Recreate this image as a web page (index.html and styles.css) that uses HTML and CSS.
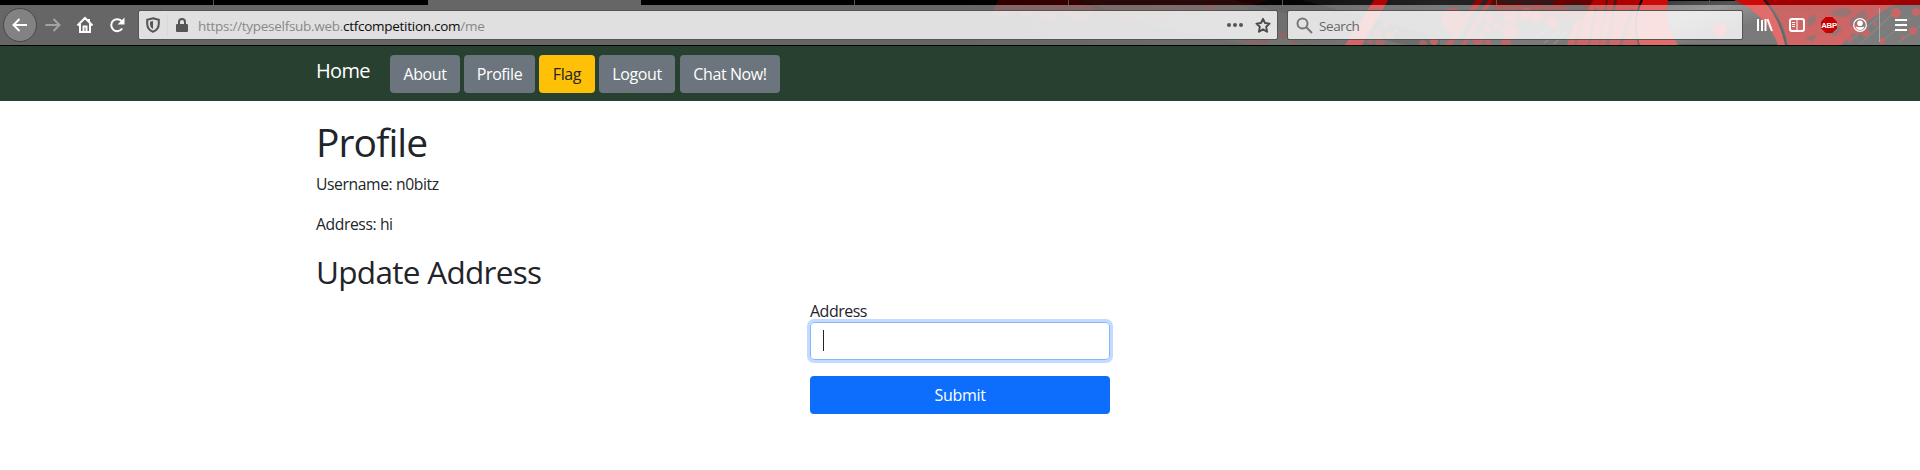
FILE: index.html
```html
<!DOCTYPE html>
<html lang="en">
<head>
<meta charset="utf-8">
<title>Profile</title>
<link rel="stylesheet" href="styles.css">
</head>
<body>
<header class="chrome">
  <svg class="theme-art" width="960" height="45" viewBox="960 0 960 45" aria-hidden="true">
    <defs>
      <linearGradient id="metal" x1="0" y1="0" x2="1" y2="0">
        <stop offset="0" stop-color="#000"/><stop offset=".35" stop-color="#101010"/><stop offset=".5" stop-color="#242424"/><stop offset="1" stop-color="#181818"/>
      </linearGradient>
      <linearGradient id="orb" x1="0" y1="0" x2="1" y2="1">
        <stop offset="0" stop-color="#303030"/><stop offset=".35" stop-color="#555"/><stop offset=".65" stop-color="#222"/><stop offset="1" stop-color="#222"/>
      </linearGradient>
      <linearGradient id="blood" x1="0" y1="0" x2="0" y2="1">
        <stop offset="0" stop-color="#a00000"/><stop offset="1" stop-color="#b40000"/>
      </linearGradient>
    </defs>
    <rect x="960" width="960" height="45" fill="url(#metal)"/>
    <path d="M1235 0H1302L1440 37V45H1405Z" fill="#000" opacity=".65"/>
    <path d="M1080 0H1235L1300 45H1250L1160 27Z" fill="#1d1d1d" opacity=".5"/>
    <g fill="#400000" opacity=".8">
      <path d="M998 0H1080L1095 8L1088 20H1070L1063 13L1057 20H1040L1035 14L1022 18L1018 12L1003 17L992 14Z"/>
      <path d="M1085 0H1270L1250 6L1215 8L1192 10L1204 14L1190 19L1178 11L1167 22L1145 16L1130 24L1112 15L1098 20Z" opacity=".6"/>
      <circle cx="1083" cy="10" r="9"/><circle cx="1210" cy="8" r="5"/><circle cx="1221" cy="14" r="3"/>
      <path d="M1240 36L1252 42L1271 37L1264 45H1248Z"/><circle cx="1283" cy="35" r="4"/><circle cx="1294" cy="42" r="3"/>
    </g>
    <path d="M1374 0H1388L1362 45H1345Z" fill="#b40000"/>
    <g fill="#900000" opacity=".75">
      <circle cx="1377" cy="34" r="4"/><circle cx="1386" cy="26" r="3"/><circle cx="1390" cy="36" r="4"/><circle cx="1380" cy="42" r="5"/><circle cx="1370" cy="41" r="3"/><circle cx="1396" cy="31" r="2"/><circle cx="1434" cy="40" r="4"/><circle cx="1423" cy="44" r="4"/><circle cx="1421" cy="30" r="2"/>
    </g>
    <path d="M1492 0H1595V12L1578 22L1562 17L1552 24L1540 18L1528 22L1515 16L1505 19L1494 11Z" fill="#6a0000"/>
    <path d="M1593 0H1642V45H1567L1574 24L1584 18Z" fill="#b00000"/>
    <g fill="#960000">
      <circle cx="1453" cy="20" r="12"/><path d="M1476 0H1483L1452 45H1445ZM1488 0H1493L1466 45H1461Z"/>
      <circle cx="1434" cy="41" r="4"/><circle cx="1490" cy="18" r="5"/><circle cx="1487" cy="29" r="4"/><circle cx="1498" cy="26" r="4"/><circle cx="1510" cy="32" r="8"/><circle cx="1511" cy="17" r="7"/><circle cx="1526" cy="14" r="6"/><circle cx="1537" cy="17" r="6"/><circle cx="1553" cy="23" r="6"/><circle cx="1478" cy="39" r="6"/><circle cx="1488" cy="42" r="3"/><circle cx="1506" cy="42" r="5"/>
    </g>
    <g fill="#202020" opacity=".7">
      <path d="M1492 0L1510 5L1520 3L1528 8L1536 3L1550 7L1556 0ZM1563 5L1580 2L1588 8L1575 14Z"/>
      <path d="M1580 22L1574 45H1576L1583 20ZM1595 7L1588 45H1590L1597 9ZM1606 0L1599 45H1600L1608 0ZM1614 0L1606 45H1609L1617 0ZM1631 8L1619 45H1622L1634 10Z"/>
    </g>
    <g fill="none" stroke="#383838" stroke-width="2"><path d="M1535 38L1552 26M1544 43L1560 31M1554 44L1568 30"/></g>
    <path d="M1642 0Q1632 20 1639 45H1786Q1781 18 1761 0Z" fill="url(#orb)" stroke="#000" stroke-width="2"/>
    <path d="M1643 0H1668Q1664 26 1678 45H1640Q1632 23 1643 0ZM1734 0H1763Q1779 17 1785 45H1778Q1767 15 1734 0Z" fill="#cc0a0a"/>
    <circle cx="1720" cy="30" r="7" fill="#b00000"/>
    <path d="M1766 0H1920V10L1888 12L1854 45H1788Q1784 20 1766 0Z" fill="url(#blood)"/>
    <path d="M1893 5H1920V45H1841L1858 28L1872 18Z" fill="#262626"/>
    <g fill="#3a2020" opacity=".75">
      <path d="M1808 18L1816 14L1815 23L1808 26ZM1830 12L1843 8L1853 11L1846 17L1834 16ZM1824 29L1834 22L1842 29L1836 36L1826 34ZM1850 19L1864 10L1875 12L1861 24L1850 26ZM1804 38L1818 34L1812 42Z"/>
    </g>
    <path d="M1848 43L1880 16M1860 44L1895 12M1880 43L1910 18M1898 43L1920 26" stroke="#363636" stroke-width="1.500"/>
    <g fill="#a00000">
      <circle cx="1896" cy="13" r="5"/><circle cx="1879" cy="6" r="4"/><circle cx="1913" cy="31" r="4"/><circle cx="1870" cy="14" r="4"/><circle cx="1857" cy="31" r="4"/><circle cx="1866" cy="33" r="4"/><circle cx="1882" cy="41" r="3"/><circle cx="1903" cy="37" r="2"/><circle cx="1916" cy="12" r="4"/><circle cx="1850" cy="39" r="3"/><circle cx="1875" cy="24" r="2"/>
    </g>
  </svg>
  <div class="tabs"><i></i><i></i><i class="selected"></i><i></i><i></i><i></i><i></i><i></i><i></i></div>
  <div class="toolbar">
    <button class="back" aria-label="Back"><svg width="18" height="18" viewBox="0 0 18 18"><path d="M16 9H3M8.500 3L2.500 9L8.500 15"/></svg></button>
    <svg class="tool forward" viewBox="0 0 18 18"><path d="M1.500 9H15M9.500 3L15.500 9L9.500 15"/></svg>
    <svg class="tool home" viewBox="0 0 18 18"><path d="M1.500 9.500L9 2L16.500 9.500M4 8V16H14V8M7.500 16V10.500H10.500V16"/><path d="M13 3V6"/></svg>
    <svg class="tool reload" viewBox="0 0 18 18"><path d="M14 5.500A6 6 0 1 0 14.200 12.500"/><path class="solid" d="M16.500 1.500V8.500H9.500Z"/></svg>
    <div class="field url">
      <svg class="shield" width="14" height="16" viewBox="0 0 14 16"><path d="M7 1.200L12.800 2.800V6.500C12.800 10.500 10.500 13.500 7 14.800C3.500 13.500 1.200 10.500 1.200 6.500V2.800Z" fill="none" stroke="#555" stroke-width="1.900"/><path d="M7 4L4 4.800V7C4 9.300 5 11 7 12Z" fill="#555"/></svg>
      <span class="rule"></span>
      <svg class="lock" width="12" height="14" viewBox="0 0 12 14"><path d="M3 7V4A3 3 0 0 1 9 4V7" fill="none" stroke="#555" stroke-width="2"/><rect y="6" width="12" height="8" rx="1" fill="#555"/></svg>
      <span class="address">https://typeselfsub.web.<b>ctfcompetition.com</b>/me</span>
      <svg class="dots" width="16" height="4" viewBox="0 0 16 4" fill="#555"><circle cx="2" cy="2" r="2"/><circle cx="8" cy="2" r="2"/><circle cx="14" cy="2" r="2"/></svg>
      <svg class="star" width="16" height="17" viewBox="0 0 16 17"><path d="M8 1.800L10 6L14.600 6.600L11.200 9.800L12.100 14.800L8 12.400L3.900 14.800L4.800 9.800L1.400 6.600L6 6Z" fill="none" stroke="#4c4c4c" stroke-width="1.900" stroke-linejoin="round"/></svg>
    </div>
    <div class="field search">
      <svg width="17" height="17" viewBox="0 0 17 17" fill="none" stroke="#777" stroke-width="2"><circle cx="6.500" cy="6.500" r="5"/><path d="M10 10L16 16"/></svg>
      <span>Search</span>
    </div>
    <div class="actions">
      <svg width="16" height="14" viewBox="0 0 16 14"><path d="M1 1V13M5 2V13M8.500 1V13M10.500 1.200L15 13" stroke-width="2" stroke="#fff"/></svg>
      <svg width="16" height="14" viewBox="0 0 16 14" fill="none" stroke="#fff"><rect x="1" y="1" width="14" height="12" rx="2" stroke-width="2"/><path d="M8 1V13"/><path d="M3 4.500H6M3 6.500H6M3 8.500H6"/></svg>
      <svg width="16" height="16" viewBox="0 0 16 16"><path d="M4.700 0H11.300L16 4.700V11.300L11.300 16H4.700L0 11.300V4.700Z" fill="#c80000"/><text x="8" y="11" class="abp">ABP</text></svg>
      <svg class="account" width="14" height="14" viewBox="0 0 14 14"><circle cx="7" cy="7" r="6.300" fill="none" stroke="#fff" stroke-width="1.200"/><circle cx="7" cy="5.200" r="2.800" fill="#fff"/><path d="M2.600 8.500Q7 10 11.400 8.500Q10.500 12 7 12Q3.500 12 2.600 8.500Z" fill="#fff"/></svg>
      <span class="divider"></span>
      <svg width="12" height="12" viewBox="0 0 12 12"><path d="M0 1H12M0 6H12M0 11H12" stroke="#fff" stroke-width="2"/></svg>
    </div>
  </div>
</header>
<nav class="navbar">
  <a class="brand">Home</a>
  <a class="btn about">About</a><a class="btn profile">Profile</a><a class="btn flag">Flag</a><a class="btn logout">Logout</a><a class="btn chat">Chat Now!</a>
</nav>
<main class="container">
  <h1>Profile</h1>
  <p>Username: n0bitz</p>
  <p>Address: hi</p>
  <h2>Update Address</h2>
  <form class="form">
    <label for="address">Address</label>
    <div class="input" id="address"><span class="caret"></span></div>
    <button class="submit" type="button">Submit</button>
  </form>
</main>
</body>
</html>
```
FILE: styles.css
```css
* { box-sizing: border-box; }
body { margin: 0; height: 470px; overflow: hidden; background: #fff; color: #212529; font: 16px/24px "Open Sans", "Noto Sans", sans-serif; }
svg { display: block; flex: none; }

.chrome { position: relative; height: 46px; background: #000; border-bottom: 1px solid #000; }
.theme-art { position: absolute; right: 0; top: 0; }
.tabs { position: relative; display: flex; height: 5px; overflow: hidden; }
.tabs i { flex: none; width: 213.8px; border-right: 1px solid #555; }
.tabs .selected { background: #666; border: 0; }
.tabs i:nth-child(2) { border: 0; }
.toolbar { position: relative; display: flex; align-items: center; height: 40px; padding-left: 3px; background: rgba(255,255,255,.4); }
.toolbar path { fill: none; stroke: #fff; stroke-width: 2; }
.back { display: flex; align-items: center; justify-content: center; width: 34px; height: 34px; padding: 0; border: 1px solid #484848; border-radius: 50%; background: #828282; }
.tool { width: 18px; height: 18px; }
.forward { margin-left: 7px; opacity: .4; }
.home { margin-left: 14px; }
.reload { margin-left: 14px; }
.toolbar .solid { fill: #fff; stroke: none; }

.field { display: flex; align-items: center; height: 30px; border: 1px solid #555; border-radius: 2px; background: rgba(255,255,255,.8); background-clip: padding-box; font-size: 13.5px; line-height: 20px; color: #666; }
.url { width: 1140px; margin-left: 12px; padding: 0 6px 0 7px; }
.toolbar .shield path:first-child, .toolbar .lock path { stroke: #555; }
.toolbar .shield path:last-child { fill: #555; stroke: none; }
.rule { width: 1px; height: 22px; margin-left: 7px; background: #d8d8d8; }
.lock { margin-left: 8px; }
.address { margin-left: 10px; padding-top: 2px; letter-spacing: -.280px; color: #888; white-space: nowrap; }
.address b { font-weight: 400; color: #0c0c0d; }
.dots { margin-left: auto; }
.star { margin-left: 12px; }
.toolbar .star path { stroke: #4c4c4c; stroke-width: 1.900; }
.search { width: 456px; margin-left: 9px; padding-left: 8px; }
.toolbar .search path { stroke: #777; }
.search span { margin-left: 6px; padding-top: 2px; letter-spacing: -.4px; }
.actions { display: flex; align-items: center; margin-left: 14px; gap: 16px; }
.toolbar .actions svg:nth-child(2) path { stroke-width: 1; }
.toolbar .actions svg:nth-child(3) path { fill: #c80000; stroke: none; }
.toolbar .account path { fill: #fff; stroke: none; }
.abp { fill: #fff; font: bold 7.800px "Liberation Sans", sans-serif; text-anchor: middle; letter-spacing: -.3px; }
.divider { width: 1px; height: 34px; margin: 0 -1px 0 -4px; background: #aaa; }

.navbar { display: flex; height: 55px; padding: 9px 0 0 316px; background: #28402f; color: #fff; }
.brand { width: 74px; font-size: 20px; line-height: 30px; padding-top: 1px; letter-spacing: -.7px; }
.btn { height: 38px; margin-right: 4px; border-radius: 4px; background: #6c757d; line-height: 38px; text-align: center; letter-spacing: -.4px; white-space: nowrap; }
.about { width: 70px; }
.profile { width: 71px; }
.flag { width: 56px; background: #ffc107; color: #212529; }
.logout { width: 76px; margin-right: 5px; }
.chat { width: 100px; }

.container { padding: 17px 0 0 316px; }
h1, h2, p { margin: 0; }
h1 { height: 54px; font-size: 39px; line-height: 48px; font-weight: 400; letter-spacing: -.9px; }
p { height: 40px; font-size: 15.700px; letter-spacing: -.4px; }
h2 { height: 47px; padding-top: 1px; font-size: 31.500px; line-height: 38px; font-weight: 400; letter-spacing: -.7px; }
.form { display: flex; flex-direction: column; width: 300px; margin-left: 494px; }
.form label { height: 23px; line-height: 24px; letter-spacing: -.5px; }
.input { height: 38px; padding: 7px 12px; border: 1px solid #86b7fe; border-radius: 4px; box-shadow: 0 0 0 3px #c2dbff; }
.caret { display: block; width: 1px; height: 21px; background: #212529; }
.submit { height: 38px; margin-top: 16px; padding: 0; border: 0; border-radius: 4px; background: #0d6efd; color: #fff; font: inherit; letter-spacing: -.3px; }
```
